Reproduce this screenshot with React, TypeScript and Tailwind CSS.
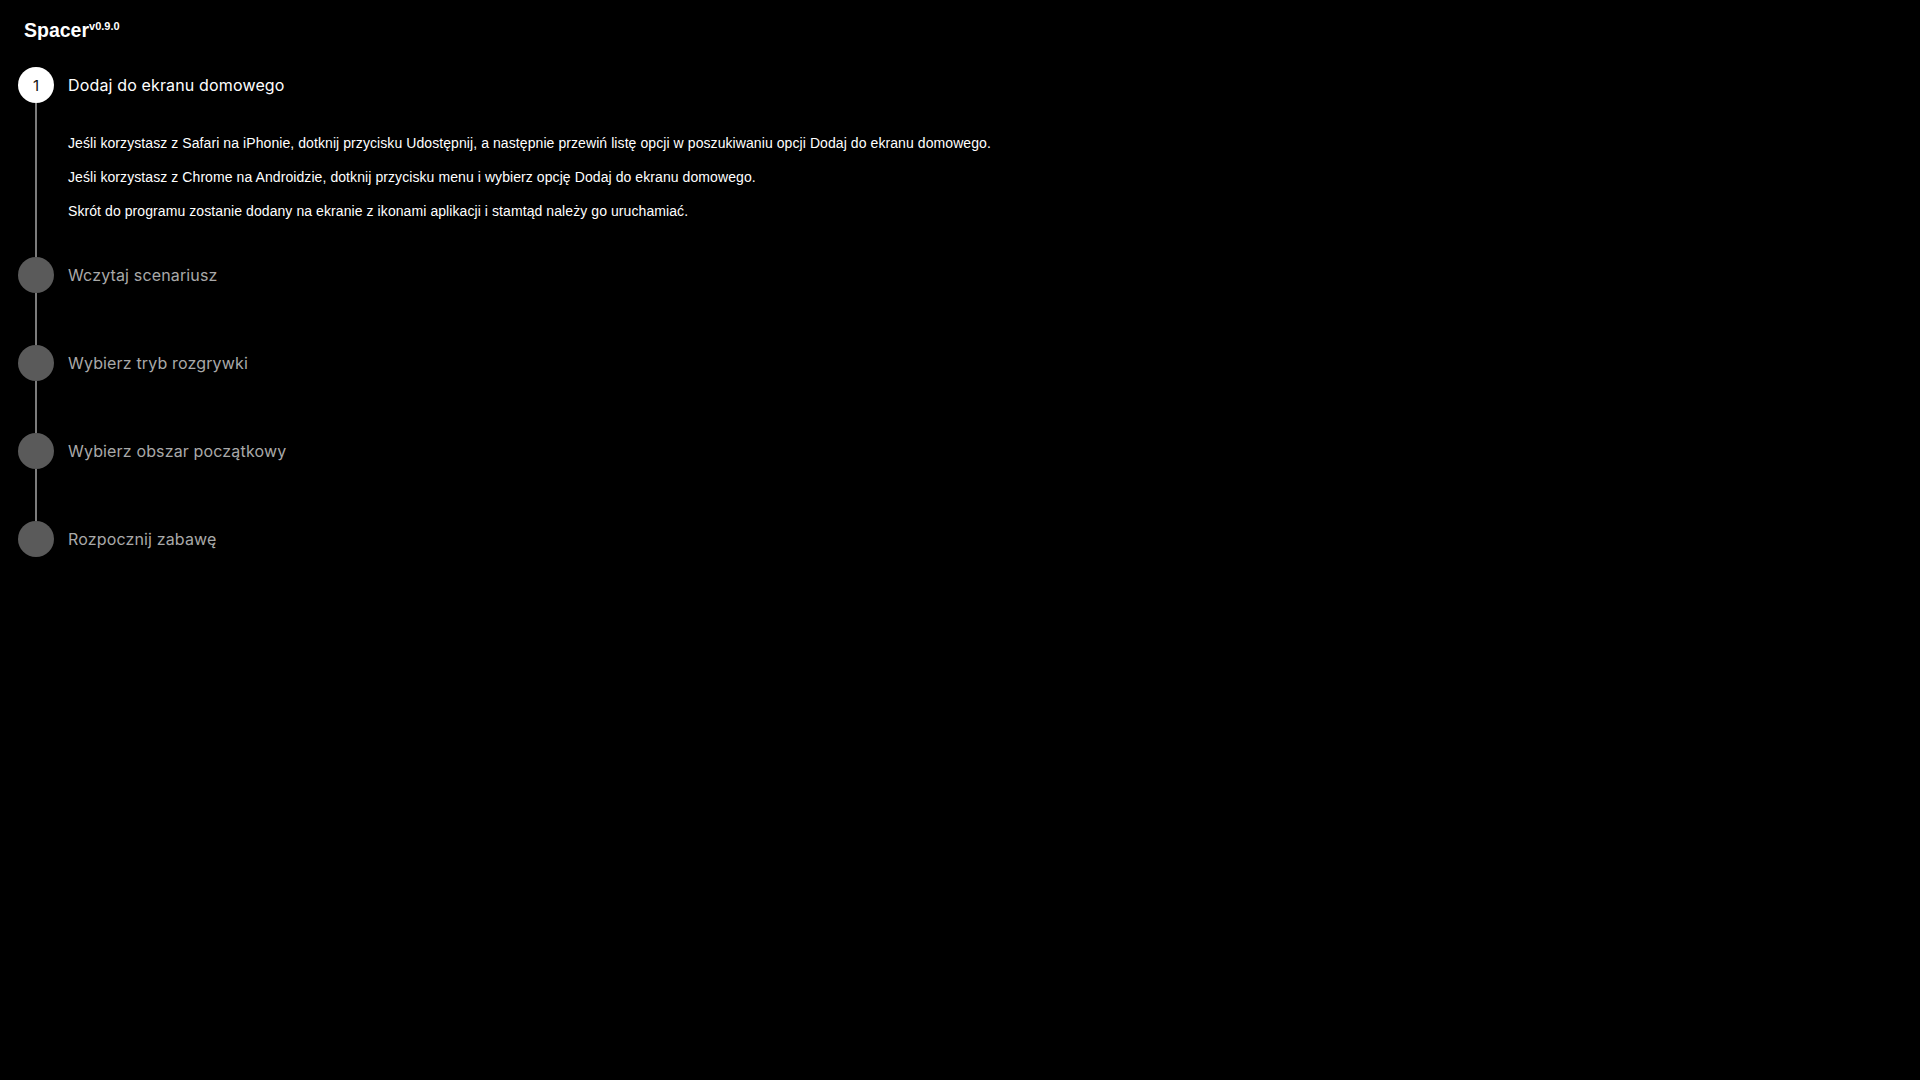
const steps = [
  "Dodaj do ekranu domowego",
  "Wczytaj scenariusz",
  "Wybierz tryb rozgrywki",
  "Wybierz obszar początkowy",
  "Rozpocznij zabawę",
];

const hints = [
  "Jeśli korzystasz z Safari na iPhonie, dotknij przycisku Udostępnij, a następnie przewiń listę opcji w poszukiwaniu opcji Dodaj do ekranu domowego.",
  "Jeśli korzystasz z Chrome na Androidzie, dotknij przycisku menu i wybierz opcję Dodaj do ekranu domowego.",
  "Skrót do programu zostanie dodany na ekranie z ikonami aplikacji i stamtąd należy go uruchamiać.",
];

function StepHead({ index, label, active }: { index: number; label: string; active: boolean }) {
  return (
    <div className="flex h-[36px] items-center gap-[14px]">
      <div
        className={`flex h-[36px] w-[36px] shrink-0 items-center justify-center rounded-full ${
          active ? "bg-white text-[#111]" : "bg-[#5a5a5a]"
        }`}
      >
        {active && <span className="text-[15px] leading-none">{index + 1}</span>}
      </div>
      <span className={`text-[16px] leading-none tracking-[0.15px] ${active ? "text-white" : "text-[#a9a9a9]"}`}>
        {label}
      </span>
    </div>
  );
}

export default function App() {
  const active = 0;
  return (
    <div className="min-h-screen w-full bg-black font-['Inter',sans-serif]">
      <header className="h-[40px] overflow-hidden pl-[24px] pt-[21px]">
        <h1 className="font-['Liberation_Sans',Arial,sans-serif] text-[19.5px] font-bold leading-[19px] text-white">
          Spacer<sup className="top-[-7px] text-[11px]">v0.9.0</sup>
        </h1>
      </header>

      <div className="mt-[27px] flex flex-col pl-[18px]">
        {steps.map((label, i) => (
          <div key={label}>
            <StepHead index={i} label={label} active={i === active} />
            {i < steps.length - 1 &&
              (i === active ? (
                <div className="ml-[17px] border-l-2 border-[#7c7c7c] pb-[36px] pl-[31px] pt-[30px]">
                  <div className="flex flex-col gap-[14px] font-['Liberation_Sans',Arial,sans-serif] text-[14px] leading-[20px] tracking-[0.08px] text-white">
                    {hints.map((h) => (
                      <p key={h}>{h}</p>
                    ))}
                  </div>
                </div>
              ) : (
                <div className="ml-[17px] h-[52px] border-l-2 border-[#7c7c7c]" />
              ))}
          </div>
        ))}
      </div>
    </div>
  );
}
